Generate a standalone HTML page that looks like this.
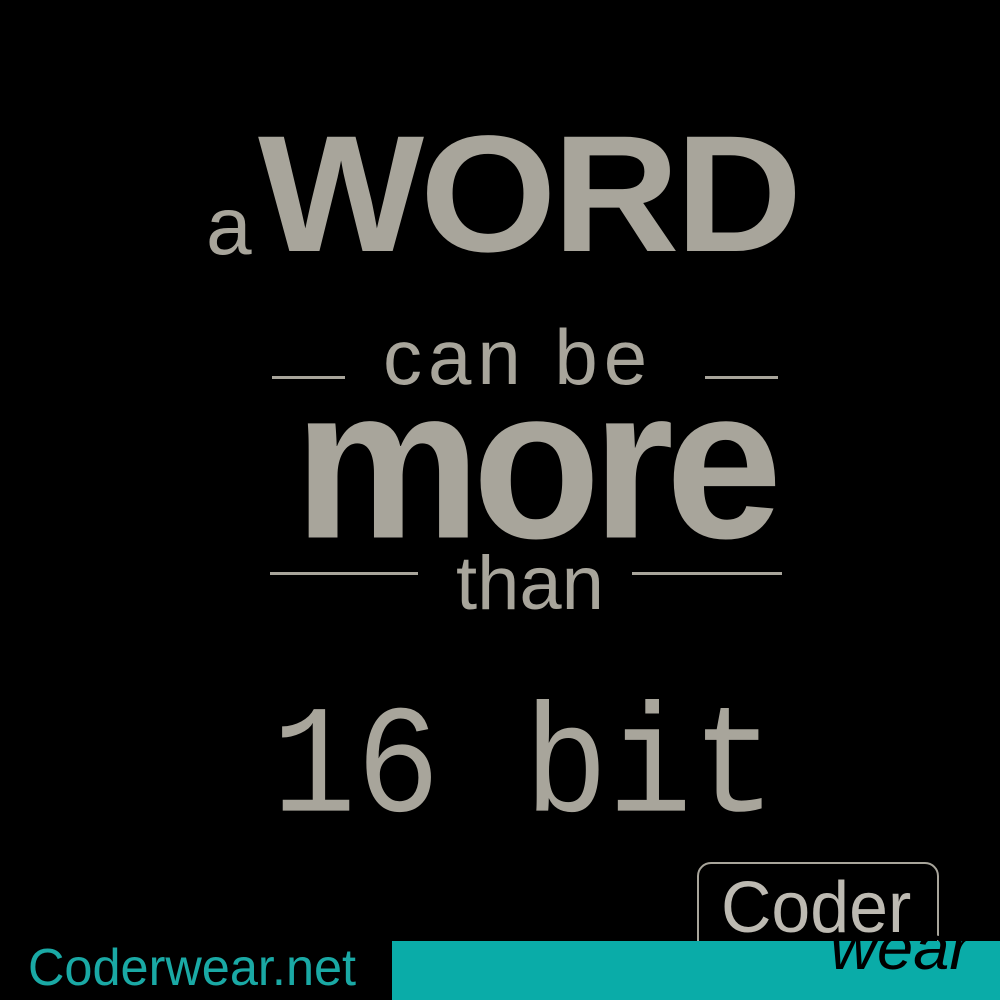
<!DOCTYPE html>
<html><head><style>
body{margin:0;width:1000px;height:1000px;background:#000;position:relative;overflow:hidden;font-family:"Liberation Sans",sans-serif;color:#a8a59b}
.t{position:absolute;white-space:nowrap;line-height:1}
.ln{position:absolute;height:3px;background:#a8a59b}
</style></head><body>
<div class="t" style="left:206px;top:186px;font-size:82px">a</div>
<div class="t" style="left:258px;top:112px;font-size:166px;font-weight:bold;letter-spacing:-4px;transform:scaleX(1.06);transform-origin:left">WORD</div>
<div class="t" style="left:383px;top:318px;font-size:78px;letter-spacing:6px">can be</div>
<div class="ln" style="left:272px;top:376px;width:73px"></div>
<div class="ln" style="left:705px;top:376px;width:73px"></div>
<div class="t" style="left:294px;top:356px;font-size:200px;font-weight:bold;letter-spacing:-8px;transform:scaleX(1.05) scaleY(1.08);transform-origin:left top">more</div>
<div class="ln" style="left:270px;top:572px;width:148px"></div>
<div class="ln" style="left:632px;top:572px;width:150px"></div>
<div class="t" style="left:456px;top:546px;font-size:76px">than</div>
<div class="t" style="left:272px;top:694px;font-size:140px;font-family:'Liberation Mono',monospace;transform:scaleY(1.1);transform-origin:top left">16 bit</div>
<div style="position:absolute;left:697px;top:862px;width:238px;height:90px;border:2px solid #a8a59b;border-radius:14px"></div>
<div style="position:absolute;left:392px;top:941px;width:608px;height:59px;background:#0aaca8"></div>
<div class="t" style="left:721px;top:872px;font-size:72px;color:#bdbab2;transform:scaleX(0.97);transform-origin:left">Coder</div>
<div class="t" style="left:830px;top:918px;font-size:62px;font-style:italic;color:#000;transform:scaleX(1.05);transform-origin:left">wear</div>
<div class="t" style="left:28px;top:942px;font-size:52px;color:#1aa9a5;transform:scaleX(0.97);transform-origin:left">Coderwear.net</div>
</body></html>
